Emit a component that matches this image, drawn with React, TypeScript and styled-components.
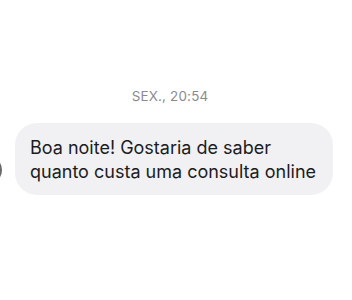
import React from "react";
import styled, { createGlobalStyle } from "styled-components";

const Global = createGlobalStyle`
  html, body { margin: 0; padding: 0; background: #ffffff; }
  body { font-family: Inter, "Noto Sans", sans-serif; }
`;

const Screen = styled.div`
  width: 352px;
  height: 300px;
  overflow: hidden;
  display: flex;
  flex-direction: column;
  padding-top: 88px;
  box-sizing: border-box;
`;

const Stamp = styled.div`
  text-align: center;
  font-size: 13.4px;
  color: #8a8a8e;
  letter-spacing: 0.2px;
  line-height: 17px;
  padding-right: 12px;
`;

const Row = styled.div`
  display: flex;
  align-items: flex-end;
  margin-top: 18px;
`;

const Avatar = styled.div`
  width: 28px;
  height: 28px;
  border-radius: 50%;
  background: #6a6a6e;
  margin-left: -26px;
  margin-right: 13px;
  margin-bottom: 11px;
  flex: none;
`;

const Bubble = styled.div`
  width: 318px;
  box-sizing: border-box;
  background: #f1f1f4;
  border-radius: 22px;
  padding: 13px 15px 11px 15px;
  font-size: 18px;
  line-height: 24px;
  color: #1c1c1e;
`;

export default function App() {
  return (
    <>
      <Global />
      <Screen>
        <Stamp>SEX., 20:54</Stamp>
        <Row>
          <Avatar />
          <Bubble>
            Boa noite! Gostaria de saber
            <br />
            quanto custa uma consulta online
          </Bubble>
        </Row>
      </Screen>
    </>
  );
}
